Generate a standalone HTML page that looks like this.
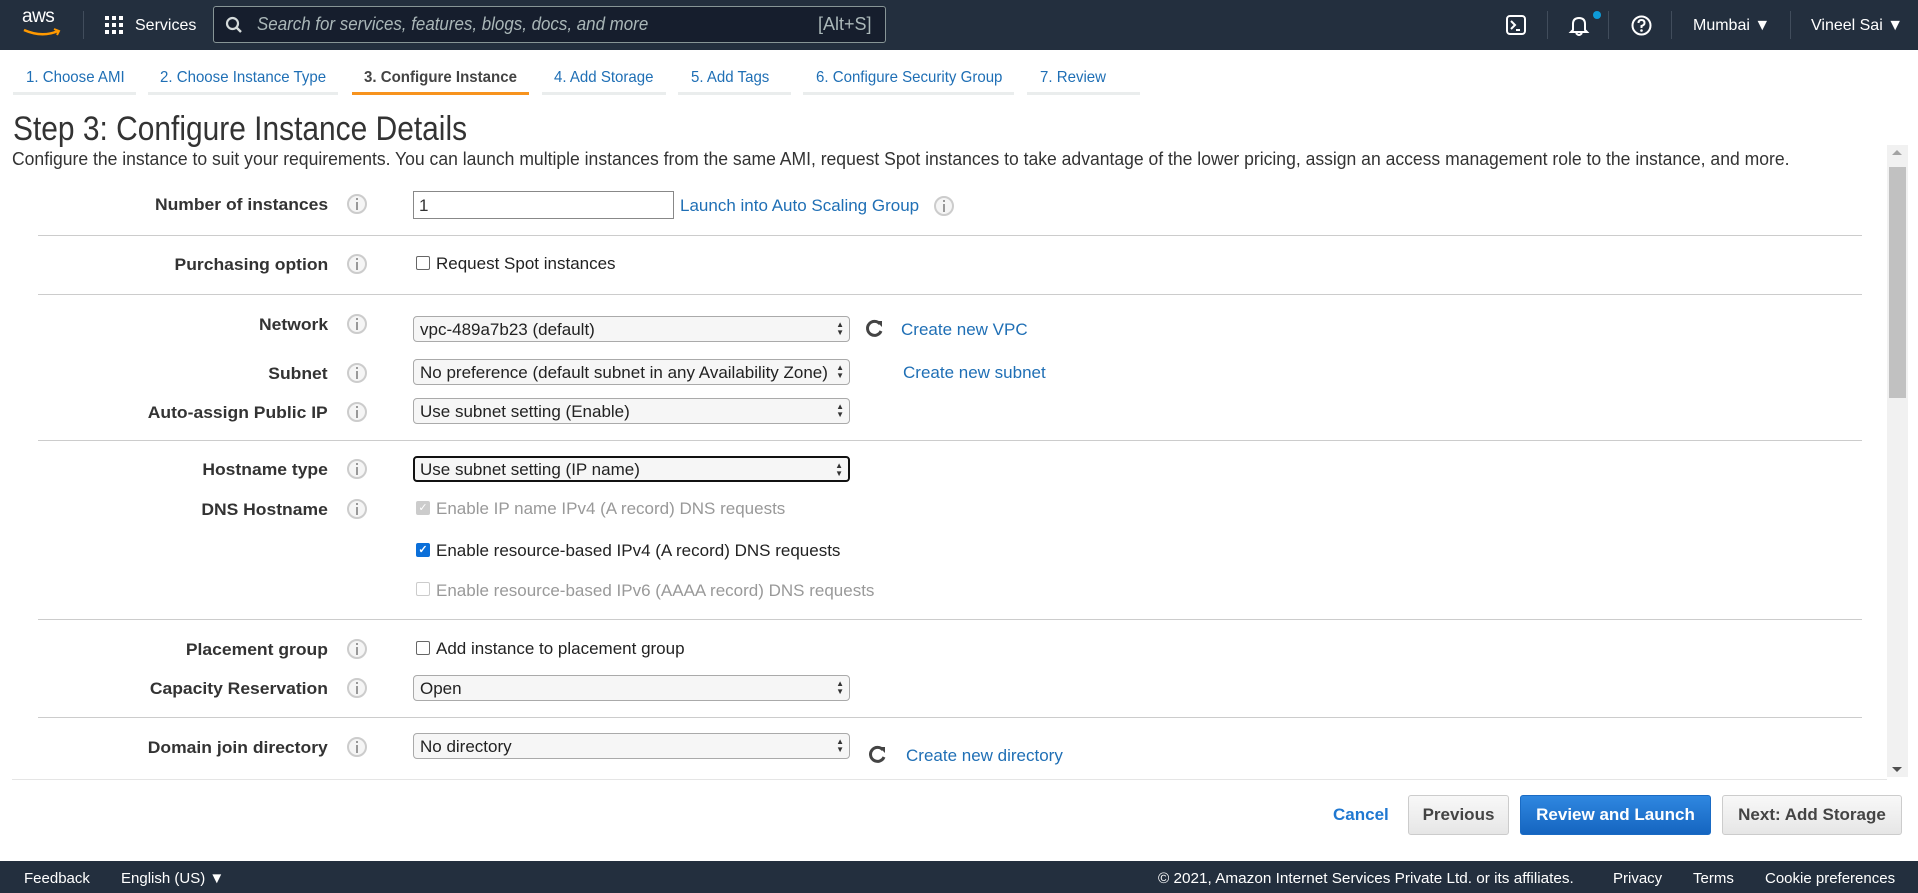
<!DOCTYPE html>
<html><head><meta charset="utf-8">
<style>
*{box-sizing:border-box;margin:0;padding:0}
body{width:1918px;height:893px;overflow:hidden;background:#fff;font-family:"Liberation Sans",Arial,sans-serif;position:relative;color:#333}
.a{position:absolute;white-space:nowrap}
.c{display:inline-block;transform-origin:left center}
.r{transform-origin:right center}
#hdr{position:absolute;left:0;top:0;width:1918px;height:50px;background:#232f3e}
.sep{position:absolute;top:11px;width:1px;height:28px;background:#414d5c}
.tab{position:absolute;top:69px;font-size:16px;color:#1f6fb5}
.tab .c{transform:scaleX(.94)}
.tabl{position:absolute;top:92px;height:3px;background:#eaeded}
.lbl{position:absolute;right:1590px;font-size:17px;font-weight:bold;color:#333;white-space:nowrap;margin-top:2px}
.lbl .c{transform:scaleX(1.03);transform-origin:right center}
.info{position:absolute;left:347px;width:20px;height:20px;border:2px solid #ccc;border-radius:50%;background:#f5f5f5}
.info:after{content:"";position:absolute;left:7px;top:6px;width:2px;height:8px;background:#999}
.info:before{content:"";position:absolute;left:7px;top:2px;width:2px;height:2px;background:#999}
.hr{position:absolute;left:38px;width:1824px;height:1px;background:#ccc}
.sel{position:absolute;left:413px;width:437px;height:26px;border:1px solid #aaa;border-radius:4px;background:#f6f6f6;font-size:17px;padding:3px 6px;color:#222;overflow:hidden;white-space:nowrap}
.sel:after{content:"\25B2\A\25BC";white-space:pre;position:absolute;right:5px;top:4px;font-size:8px;line-height:8px;color:#333;background:#f6f6f6;padding-left:2px}
.lnk{position:absolute;font-size:17px;color:#1f6fb5;white-space:nowrap;margin-top:1px}
.cb{position:absolute;width:14px;height:14px;border:1px solid #666;border-radius:2px;background:#fff}
.txt{position:absolute;font-size:17px;white-space:nowrap;color:#222;margin-top:1px}
.btn{position:absolute;top:795px;height:40px;border:1px solid #ccc;border-radius:3px;background:linear-gradient(#f8f8f8,#e6e6e6);font-size:17px;font-weight:bold;color:#444;text-align:center;line-height:38px}
.ft{position:absolute;top:870px;font-size:15px;color:#fff;white-space:nowrap}
</style></head><body>
<div id="hdr">
 <div class="a" style="left:22px;top:6px;color:#fff;font-size:19px;letter-spacing:-.5px">aws</div>
 <svg class="a" style="left:22px;top:28px" width="40" height="10"><path d="M2 2 Q20 10 36 3" stroke="#f90" stroke-width="2.5" fill="none"/><path d="M32 1 L37 3 L35 7" stroke="#f90" stroke-width="2" fill="none"/></svg>
 <div class="sep" style="left:83px"></div>
 <svg class="a" style="left:105px;top:16px" width="18" height="18" fill="#fff"><rect x="0" y="0" width="4" height="4"/><rect x="7" y="0" width="4" height="4"/><rect x="14" y="0" width="4" height="4"/><rect x="0" y="7" width="4" height="4"/><rect x="7" y="7" width="4" height="4"/><rect x="14" y="7" width="4" height="4"/><rect x="0" y="14" width="4" height="4"/><rect x="7" y="14" width="4" height="4"/><rect x="14" y="14" width="4" height="4"/></svg>
 <div class="a" style="left:135px;top:17px;color:#fff;font-size:16px"><span class="c">Services</span></div>
 <div class="a" style="left:213px;top:6px;width:673px;height:37px;background:#161e2d;border:1px solid #879596;border-radius:3px"></div>
 <svg class="a" style="left:225px;top:16px" width="18" height="18"><circle cx="7.5" cy="7.5" r="5.5" stroke="#d5dbdb" stroke-width="2.2" fill="none"/><path d="M11.5 11.5 L16 16" stroke="#d5dbdb" stroke-width="2.4"/></svg>
 <div class="a" style="left:257px;top:14px;color:#aab7b8;font-size:18px;font-style:italic"><span class="c" style="transform:scaleX(.94)">Search for services, features, blogs, docs, and more</span></div>
 <div class="a" style="left:818px;top:14px;color:#aab7b8;font-size:18px"><span class="c">[Alt+S]</span></div>
 <svg class="a" style="left:1506px;top:15px" width="20" height="20"><rect x="1" y="1" width="18" height="18" rx="3" stroke="#fff" stroke-width="2" fill="none"/><path d="M5 6 L9 10 L5 14" stroke="#fff" stroke-width="2" fill="none"/><path d="M10 15 H14" stroke="#fff" stroke-width="2"/></svg>
 <div class="sep" style="left:1547px"></div>
 <svg class="a" style="left:1568px;top:14px" width="22" height="22"><path d="M5 16 L5 10 Q5 4 11 4 Q17 4 17 10 L17 16 L19 18 L3 18 Z" stroke="#fff" stroke-width="2" fill="none"/><path d="M8 19 Q11 23 14 19" stroke="#fff" stroke-width="2" fill="none"/></svg>
 <div class="a" style="left:1593px;top:11px;width:8px;height:8px;border-radius:50%;background:#0e9bd8"></div>
 <div class="sep" style="left:1608px"></div>
 <svg class="a" style="left:1631px;top:15px" width="21" height="21"><circle cx="10.5" cy="10.5" r="9" stroke="#fff" stroke-width="2" fill="none"/><path d="M7.5 8 Q7.5 5 10.5 5 Q13.5 5 13.5 8 Q13.5 10 10.5 11 L10.5 13" stroke="#fff" stroke-width="2" fill="none"/><circle cx="10.5" cy="15.5" r="1.3" fill="#fff"/></svg>
 <div class="sep" style="left:1671px"></div>
 <div class="a" style="left:1693px;top:17px;color:#fff;font-size:16px"><span class="c">Mumbai ▼</span></div>
 <div class="sep" style="left:1790px"></div>
 <div class="a" style="left:1811px;top:17px;color:#fff;font-size:16px"><span class="c">Vineel Sai ▼</span></div>
</div>

<div class="tabl" style="left:13px;width:123px"></div><div class="tab" style="left:26px"><span class="c">1. Choose AMI</span></div>
<div class="tabl" style="left:148px;width:190px"></div><div class="tab" style="left:160px"><span class="c">2. Choose Instance Type</span></div>
<div class="tabl" style="left:352px;width:177px;background:#f7931e"></div><div class="tab" style="left:364px;color:#444;font-weight:bold"><span class="c">3. Configure Instance</span></div>
<div class="tabl" style="left:542px;width:124px"></div><div class="tab" style="left:554px"><span class="c">4. Add Storage</span></div>
<div class="tabl" style="left:678px;width:113px"></div><div class="tab" style="left:691px"><span class="c">5. Add Tags</span></div>
<div class="tabl" style="left:803px;width:211px"></div><div class="tab" style="left:816px"><span class="c">6. Configure Security Group</span></div>
<div class="tabl" style="left:1027px;width:113px"></div><div class="tab" style="left:1040px"><span class="c">7. Review</span></div>

<div class="a" style="left:13px;top:110px;font-size:34px;color:#333"><span class="c" style="transform:scaleX(.88)">Step 3: Configure Instance Details</span></div>
<div class="a" style="left:12px;top:149px;font-size:18px;color:#333"><span class="c" style="transform:scaleX(.975)">Configure the instance to suit your requirements. You can launch multiple instances from the same AMI, request Spot instances to take advantage of the lower pricing, assign an access management role to the instance, and more.</span></div>

<div class="a" style="left:1887px;top:145px;width:21px;height:632px;background:#f1f1f1"></div>
<div class="a" style="left:1889px;top:167px;width:17px;height:231px;background:#c1c1c1"></div>
<div class="a" style="left:1892px;top:150px;width:0;height:0;border:5px solid transparent;border-bottom-color:#a3a3a3;border-top:0"></div>
<div class="a" style="left:1892px;top:767px;width:0;height:0;border:5px solid transparent;border-top-color:#505050;border-bottom:0"></div>

<!-- rows -->
<div class="lbl" style="top:193px"><span class="c r">Number of instances</span></div><div class="info" style="top:194px"></div>
<div class="a" style="left:413px;top:191px;width:261px;height:28px;border:1px solid #888;font-size:17px;padding:4px 5px">1</div>
<div class="lnk" style="left:680px;top:195px"><span class="c">Launch into Auto Scaling Group</span></div><div class="info" style="left:934px;top:196px"></div>
<div class="hr" style="top:235px"></div>

<div class="lbl" style="top:253px"><span class="c r">Purchasing option</span></div><div class="info" style="top:254px"></div>
<div class="cb" style="left:416px;top:256px"></div><div class="txt" style="left:436px;top:253px"><span class="c">Request Spot instances</span></div>
<div class="hr" style="top:294px"></div>

<div class="lbl" style="top:313px"><span class="c r">Network</span></div><div class="info" style="top:314px"></div>
<div class="sel" style="top:316px"><span class="c">vpc-489a7b23 (default)</span></div>
<svg class="a" style="left:865px;top:318px" width="20" height="20"><path d="M15 6 A7 7 0 1 0 16 13" stroke="#444" stroke-width="3" fill="none"/><path d="M11 3 L17 3 L17 9 Z" fill="#444"/></svg>
<div class="lnk" style="left:901px;top:319px"><span class="c">Create new VPC</span></div>

<div class="lbl" style="top:362px"><span class="c r">Subnet</span></div><div class="info" style="top:363px"></div>
<div class="sel" style="top:359px"><span class="c">No preference (default subnet in any Availability Zone)</span></div>
<div class="lnk" style="left:903px;top:362px"><span class="c">Create new subnet</span></div>

<div class="lbl" style="top:401px"><span class="c r">Auto-assign Public IP</span></div><div class="info" style="top:402px"></div>
<div class="sel" style="top:398px"><span class="c">Use subnet setting (Enable)</span></div>
<div class="hr" style="top:440px"></div>

<div class="lbl" style="top:458px"><span class="c r">Hostname type</span></div><div class="info" style="top:459px"></div>
<div class="sel" style="top:456px;border:2px solid #111;padding:2px 5px"><span class="c">Use subnet setting (IP name)</span></div>
<div class="lbl" style="top:498px"><span class="c r">DNS Hostname</span></div><div class="info" style="top:499px"></div>
<div class="cb" style="left:416px;top:501px;background:#ccc;border-color:#ccc;color:#fff;font-size:11px;line-height:12px;text-align:center">✓</div><div class="txt" style="left:436px;top:498px;color:#999"><span class="c">Enable IP name IPv4 (A record) DNS requests</span></div>
<div class="cb" style="left:416px;top:543px;background:#0b6fd9;border-color:#0b6fd9;color:#fff;font-size:11px;line-height:12px;text-align:center;font-weight:bold">✓</div><div class="txt" style="left:436px;top:540px"><span class="c">Enable resource-based IPv4 (A record) DNS requests</span></div>
<div class="cb" style="left:416px;top:582px;border-color:#ccc"></div><div class="txt" style="left:436px;top:580px;color:#999"><span class="c">Enable resource-based IPv6 (AAAA record) DNS requests</span></div>
<div class="hr" style="top:619px"></div>

<div class="lbl" style="top:638px"><span class="c r">Placement group</span></div><div class="info" style="top:639px"></div>
<div class="cb" style="left:416px;top:641px"></div><div class="txt" style="left:436px;top:638px"><span class="c">Add instance to placement group</span></div>
<div class="lbl" style="top:677px"><span class="c r">Capacity Reservation</span></div><div class="info" style="top:678px"></div>
<div class="sel" style="top:675px"><span class="c">Open</span></div>
<div class="hr" style="top:717px"></div>

<div class="lbl" style="top:736px"><span class="c r">Domain join directory</span></div><div class="info" style="top:737px"></div>
<div class="sel" style="top:733px"><span class="c">No directory</span></div>
<svg class="a" style="left:868px;top:744px" width="20" height="20"><path d="M15 6 A7 7 0 1 0 16 13" stroke="#444" stroke-width="3" fill="none"/><path d="M11 3 L17 3 L17 9 Z" fill="#444"/></svg>
<div class="lnk" style="left:906px;top:745px"><span class="c">Create new directory</span></div>
<div class="hr" style="top:779px;left:12px;width:1875px;background:#e5e5e5"></div>

<div class="a" style="left:1333px;top:805px;font-size:17px;font-weight:bold;color:#1f78d1"><span class="c">Cancel</span></div>
<div class="btn" style="left:1408px;width:101px"><span class="c">Previous</span></div>
<div class="btn" style="left:1520px;width:191px;background:linear-gradient(#2f87e0,#1565c0);border-color:#1a6bc4;color:#fff"><span class="c">Review and Launch</span></div>
<div class="btn" style="left:1722px;width:180px"><span class="c">Next: Add Storage</span></div>

<div class="a" style="left:0;top:861px;width:1918px;height:32px;background:#232f3e"></div>
<div class="ft" style="left:24px"><span class="c">Feedback</span></div>
<div class="ft" style="left:121px"><span class="c">English (US) ▼</span></div>
<div class="ft" style="left:1158px"><span class="c" style="transform:scaleX(1.02)">© 2021, Amazon Internet Services Private Ltd. or its affiliates.</span></div>
<div class="ft" style="left:1613px"><span class="c">Privacy</span></div>
<div class="ft" style="left:1693px"><span class="c">Terms</span></div>
<div class="ft" style="left:1765px"><span class="c">Cookie preferences</span></div>
</body></html>
